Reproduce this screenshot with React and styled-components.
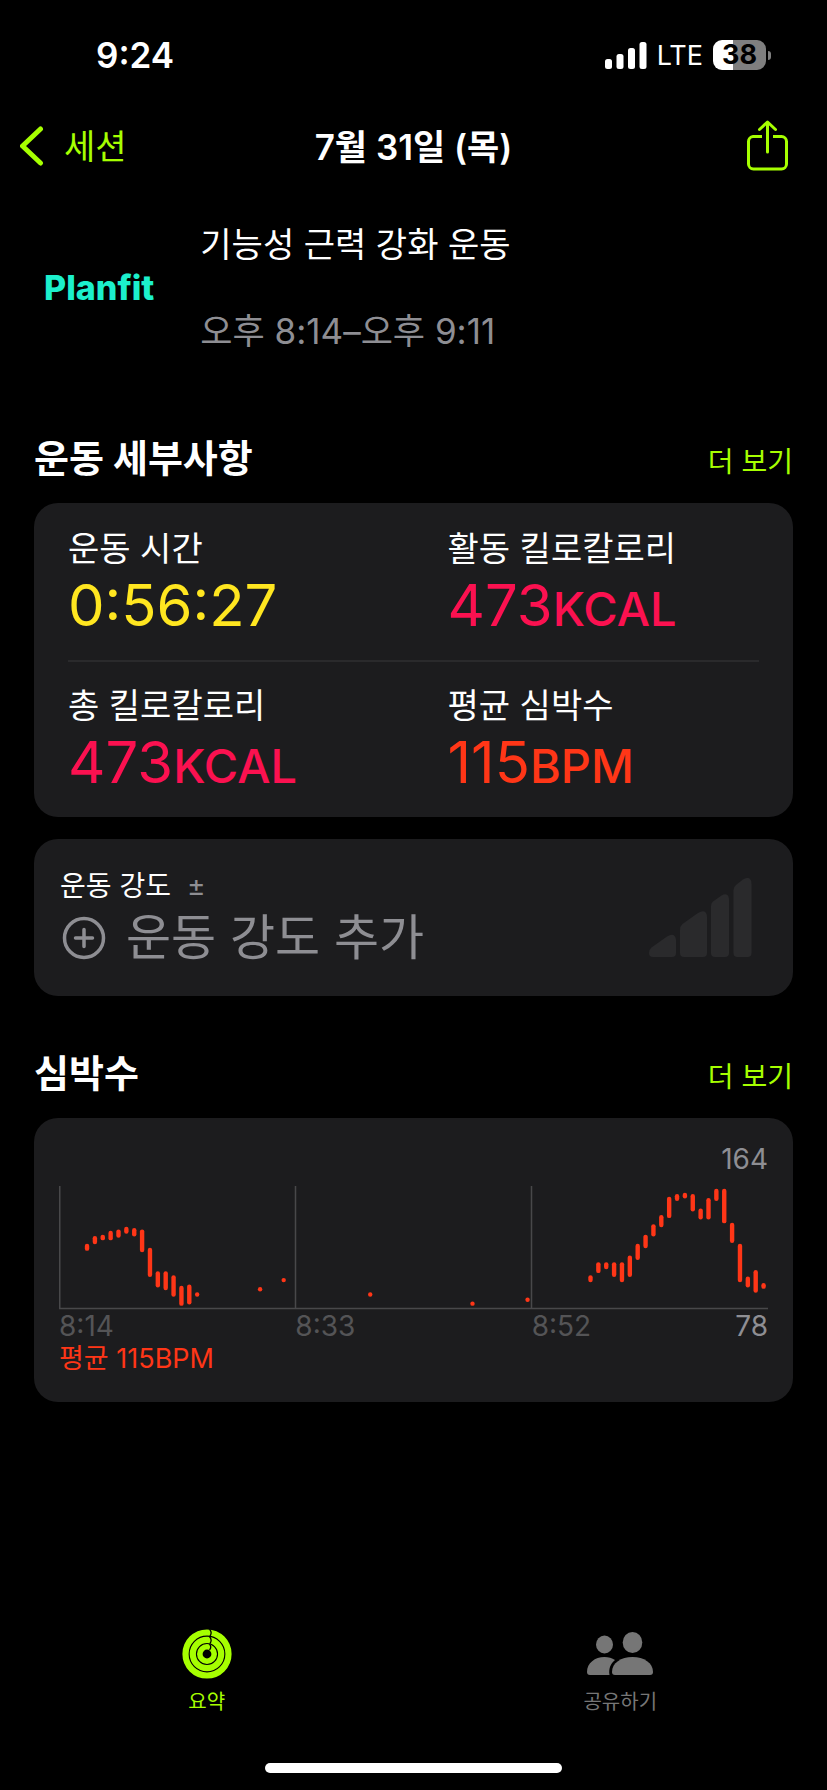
import React from 'react';
import styled, { createGlobalStyle } from 'styled-components';

const lime = '#a6ff00';
const red = '#ff3617';
const pink = '#fb1150';
const yellow = '#ffe620';
const grey = '#8e8e93';

const GlobalStyle = createGlobalStyle`
  * {
    box-sizing: border-box;
  }
  body {
    margin: 0;
    background: #000;
    color: #fff;
    font-family: Inter, "Noto Sans CJK KR", sans-serif;
  }
  h1, h2, p, dl, dt, dd {
    margin: 0;
  }
  button {
    border: 0;
    padding: 0;
    background: none;
    color: inherit;
    font: inherit;
    cursor: pointer;
  }
  a {
    color: inherit;
    text-decoration: none;
  }
  svg {
    display: block;
  }
`;

const Screen = styled.div`
  min-height: 100vh;
  display: flex;
  flex-direction: column;
`;

const StatusBar = styled.div`
  height: 110px;
  padding: 0 56px 0 96px;
  display: flex;
  align-items: center;
  justify-content: space-between;
`;

const Clock = styled.span`
  font-size: 35px;
  font-weight: 600;
`;

const StatusIcons = styled.div`
  display: flex;
  align-items: center;
  gap: 10px;
  font-size: 27px;
`;

const Battery = styled.div`
  display: flex;
  align-items: center;
  gap: 2px;

  &::after {
    content: '';
    width: 3px;
    height: 9px;
    border-radius: 0 3px 3px 0;
    background: #7f7f7f;
  }
`;

const BatteryLevel = styled.span`
  width: 53px;
  height: 30px;
  border-radius: 9px;
  background: linear-gradient(to right, #fff 38%, #7f7f7f 38%);
  color: #000;
  font-size: 27px;
  font-weight: 700;
  line-height: 30px;
  text-align: center;
`;

const NavBar = styled.nav`
  height: 72px;
  padding: 0 20px;
  display: grid;
  grid-template-columns: 1fr auto 1fr;
  align-items: center;
`;

const BackLink = styled.a`
  display: flex;
  align-items: center;
  gap: 20px;
  color: ${lime};
  font-size: 34px;
`;

const BackText = styled.span`
  padding-bottom: 4px;
`;

const NavTitle = styled.h1`
  padding-bottom: 4px;
  font-size: 35px;
  font-weight: 600;
`;

const ShareButton = styled.button`
  justify-self: end;
  margin-right: 18px;
`;

const Content = styled.main`
  flex: 1;
  padding: 0 34px;
`;

const Intro = styled.header`
  height: 199px;
  padding: 39px 10px 0;
  display: flex;
  gap: 46px;
`;

const Brand = styled.span`
  padding-top: 47px;
  color: #1cf0cc;
  font-size: 34px;
  font-weight: 800;
  line-height: 40px;
`;

const IntroText = styled.div`
  display: flex;
  flex-direction: column;
  gap: 38px;
  font-size: 34px;
  line-height: 48px;
`;

const WorkoutTime = styled.p`
  color: ${grey};
  font-size: 35px;
`;

const SectionHead = styled.div`
  height: 122px;
  padding-bottom: 21px;
  display: flex;
  align-items: flex-end;
  justify-content: space-between;
  line-height: 48px;
`;

const SectionTitle = styled.h2`
  font-size: 38px;
  font-weight: 700;
`;

const MoreLink = styled.a`
  color: ${lime};
  font-size: 28px;
  line-height: 40px;
`;

const Card = styled.div`
  border-radius: 24px;
  background: #1c1c1e;
`;

const StatsCard = styled(Card)`
  padding: 0 34px;
`;

const StatRow = styled.dl`
  height: 157px;
  padding-top: 22px;
  display: grid;
  grid-template-columns: 1fr 1fr;
  column-gap: 68px;
  border-top: 2px solid transparent;

  & + & {
    border-color: #2a2a2c;
  }
`;

const StatLabel = styled.dt`
  font-size: 34px;
  line-height: 44px;
  white-space: nowrap;
`;

const StatValue = styled.dd`
  color: ${(props) => props.$color};
  font-size: 58px;
  line-height: 68px;
`;

const Unit = styled.span`
  font-size: 47px;
  font-weight: 500;
`;

const EffortCard = styled(Card).attrs({ as: 'button' })`
  width: 100%;
  height: 157px;
  margin-top: 22px;
  padding: 0 41px 0 26px;
  display: flex;
  align-items: center;
  justify-content: space-between;
  text-align: left;
`;

const EffortLabel = styled.span`
  display: flex;
  gap: 16px;
  font-size: 28px;
  line-height: 40px;
`;

const EffortAction = styled.span`
  padding-left: 2px;
  display: flex;
  align-items: center;
  gap: 20px;
  color: ${grey};
  font-size: 49px;
  line-height: 64px;
`;

const Grey = styled.span`
  color: ${grey};
`;

const ChartCard = styled(Card)`
  height: 284px;
  padding: 24px 25px;
  font-size: 28px;
  line-height: 34px;
`;

const ChartMax = styled.p`
  margin-bottom: 10px;
  color: ${grey};
  text-align: right;
`;

const ChartAxis = styled.div`
  display: grid;
  grid-template-columns: 1fr 1fr 1fr;
  color: #545456;
  line-height: 32px;
`;

const AxisEnd = styled.span`
  display: flex;
  justify-content: space-between;
`;

const ChartAverage = styled.p`
  color: ${red};
  font-size: 27px;
`;

const TabBar = styled.nav`
  display: flex;
  height: 134px;
`;

const Tab = styled.a`
  flex: 1;
  display: flex;
  flex-direction: column;
  align-items: center;
  gap: 8px;
  color: ${(props) => (props.$active ? lime : '#767676')};
  font-size: 20px;
  line-height: 30px;
`;

const HomeIndicator = styled.div`
  width: 36%;
  height: 10px;
  margin: 0 auto 17px;
  border-radius: 5px;
  background: #fff;
`;

// [minute slot, lowest bpm, highest bpm]
const heartRate = [
  [3, 120, 122], [4, 125, 128], [5, 128, 129], [6, 128, 132], [7, 130, 133],
  [8, 133, 135], [9, 131, 134], [10, 119, 133], [11, 100, 119], [12, 92, 101],
  [13, 90, 101], [14, 85, 98], [15, 78, 90], [16, 79, 91], [17, 85, 85],
  [25, 89, 89], [28, 96, 96], [39, 85, 85], [52, 78, 78], [59, 81, 81],
  [67, 96, 98], [68, 103, 108], [69, 106, 108], [70, 100, 108], [71, 96, 108],
  [72, 100, 113], [73, 113, 122], [74, 122, 129], [75, 131, 137], [76, 138, 144],
  [77, 145, 158], [78, 158, 160], [79, 160, 161], [80, 150, 160], [81, 144, 149],
  [82, 144, 157], [83, 158, 164], [84, 141, 164], [85, 126, 138], [86, 96, 122],
  [87, 92, 97], [88, 88, 102], [89, 91, 92],
];

const slotX = (slot) => 0.5 + (slot + 0.5) * (708 / 90);
const bpmY = (bpm) => 5 + (164 - bpm) * 1.31;

const HeartRateChart = () => (
  <svg viewBox="0 0 709 124" width="100%" role="img" aria-label="심박수">
    <path d="M0.750 0V122.500H709M236.500 0V122.500M472.500 0V122.500" fill="none" stroke="#48484a" strokeWidth="1.500" />
    {heartRate.map(([slot, low, high]) => (
      <path
        key={slot}
        d={`M${slotX(slot)} ${bpmY(high)}V${bpmY(low) + 0.01}`}
        stroke={red}
        strokeWidth="4.400"
        strokeLinecap="round"
      />
    ))}
  </svg>
);

const SignalIcon = () => (
  <svg width="42" height="27" viewBox="0 0 42 27" fill="#fff">
    <rect x="0" y="17" width="7" height="10" rx="2.500" />
    <rect x="11.500" y="12" width="7" height="15" rx="2.500" />
    <rect x="23" y="6" width="7" height="21" rx="2.500" />
    <rect x="34.500" y="0" width="7" height="27" rx="2.500" />
  </svg>
);

const BackIcon = () => (
  <svg width="24" height="40" viewBox="0 0 24 40" fill="none" stroke={lime} strokeWidth="5" strokeLinecap="round" strokeLinejoin="round">
    <path d="M20.500 3L2.500 20L20.500 37" />
  </svg>
);

const ShareIcon = () => (
  <svg width="42" height="52" viewBox="0 0 42 52" fill="none" stroke={lime} strokeWidth="3" strokeLinecap="round" strokeLinejoin="round">
    <path strokeLinecap="butt" d="M15 16.500H6A5 5 0 0 0 1.500 21.500V44A5 5 0 0 0 6.500 49H34.500A5 5 0 0 0 39.500 44V21.500A5 5 0 0 0 34.500 16.500H26" />
    <path d="M20.500 32V2M12.500 9.500L20.500 2L28.500 9.500" />
  </svg>
);

const PlusIcon = () => (
  <svg width="44" height="44" viewBox="0 0 44 44" fill="none" stroke={grey} strokeWidth="3.500" strokeLinecap="round">
    <circle cx="22" cy="22" r="19.500" />
    <path d="M22 13.500V30.500M13.500 22H30.500" />
  </svg>
);

const EffortIcon = () => (
  <svg width="103" height="80" viewBox="0 0 103 80" fill="#2a2a2c">
    <path d="M2.500 69.500L18 58.500Q22 56 24.500 57Q27 58.500 27 62V75Q27 79 23 79H4Q0 79 0 75Q0 71.500 2.500 69.500Z" />
    <path d="M33.500 46L49 35Q53 32.500 55.500 33.500Q58 35 58 39V75Q58 79 54 79H35Q31 79 31 75V52Q31 48 33.500 46Z" />
    <path d="M64 23.500L72.500 17.500Q76 15.500 78 16.800Q80 18 80 22V75Q80 79 76 79H66Q62 79 62 75V28Q62 25 64 23.500Z" />
    <path d="M87 7L94 1.500Q98 -1 100.500 0.500Q102.500 2 102.500 6V75Q102.500 79 98.500 79H88.500Q84.500 79 84.500 75V12Q84.500 9 87 7Z" />
  </svg>
);

const RingsIcon = () => (
  <svg width="50" height="50" viewBox="0 0 50 50" fill="none">
    <g stroke={lime} strokeWidth="6.200">
      <circle cx="25" cy="25" r="21.500" />
      <circle cx="25" cy="25" r="14.200" />
      <circle cx="25" cy="25" r="7.200" strokeWidth="5.600" />
    </g>
    <path d="M27.500 0Q30.500 3.500 28 7M27.500 7.500Q30.500 11 28 14.500M27.500 15Q30 18 27.500 21" stroke="#000" strokeWidth="1.300" />
  </svg>
);

const SharingIcon = () => (
  <svg width="66" height="50" viewBox="0 0 66 50" fill="#767676">
    <ellipse cx="17.500" cy="15.500" rx="8.500" ry="9" />
    <ellipse cx="45.500" cy="13.500" rx="9.800" ry="10.500" />
    <path d="M3 46Q0 46 0 43C0 34 8 28 17.500 28Q23.500 28 28 31C23.500 34.500 21.500 40 22.500 46Z" />
    <path d="M28 46Q25 46 25 43C25 34 34 28 45.500 28S66 34 66 43Q66 46 63 46Z" />
  </svg>
);

const statRows = [
  [
    { label: '운동 시간', value: '0:56:27', color: yellow },
    { label: '활동 킬로칼로리', value: '473', unit: 'KCAL', color: pink },
  ],
  [
    { label: '총 킬로칼로리', value: '473', unit: 'KCAL', color: pink },
    { label: '평균 심박수', value: '115', unit: 'BPM', color: red },
  ],
];

const App = () => {
  return (
    <>
      <GlobalStyle />
      <Screen>
        <StatusBar>
          <Clock>9:24</Clock>
          <StatusIcons>
            <SignalIcon />
            <span>LTE</span>
            <Battery>
              <BatteryLevel>38</BatteryLevel>
            </Battery>
          </StatusIcons>
        </StatusBar>

        <NavBar>
          <BackLink href="#sessions">
            <BackIcon />
            <BackText>세션</BackText>
          </BackLink>
          <NavTitle>7월 31일 (목)</NavTitle>
          <ShareButton aria-label="공유">
            <ShareIcon />
          </ShareButton>
        </NavBar>

        <Content>
          <Intro>
            <Brand>Planfit</Brand>
            <IntroText>
              <p>기능성 근력 강화 운동</p>
              <WorkoutTime>오후 8:14–오후 9:11</WorkoutTime>
            </IntroText>
          </Intro>

          <SectionHead>
            <SectionTitle>운동 세부사항</SectionTitle>
            <MoreLink href="#details">더 보기</MoreLink>
          </SectionHead>
          <StatsCard>
            {statRows.map((row, i) => (
              <StatRow key={i}>
                {row.map((stat) => (
                  <div key={stat.label}>
                    <StatLabel>{stat.label}</StatLabel>
                    <StatValue $color={stat.color}>
                      {stat.value}
                      {stat.unit && <Unit>{stat.unit}</Unit>}
                    </StatValue>
                  </div>
                ))}
              </StatRow>
            ))}
          </StatsCard>

          <EffortCard>
            <span>
              <EffortLabel>
                운동 강도 <Grey>±</Grey>
              </EffortLabel>
              <EffortAction>
                <PlusIcon />
                운동 강도 추가
              </EffortAction>
            </span>
            <EffortIcon />
          </EffortCard>

          <SectionHead>
            <SectionTitle>심박수</SectionTitle>
            <MoreLink href="#heart-rate">더 보기</MoreLink>
          </SectionHead>
          <ChartCard>
            <ChartMax>164</ChartMax>
            <HeartRateChart />
            <ChartAxis>
              <span>8:14</span>
              <span>8:33</span>
              <AxisEnd>
                8:52
                <Grey>78</Grey>
              </AxisEnd>
            </ChartAxis>
            <ChartAverage>평균 115BPM</ChartAverage>
          </ChartCard>
        </Content>

        <TabBar>
          <Tab href="#summary" $active>
            <RingsIcon />
            요약
          </Tab>
          <Tab href="#sharing">
            <SharingIcon />
            공유하기
          </Tab>
        </TabBar>
        <HomeIndicator />
      </Screen>
    </>
  );
};

export default App;
